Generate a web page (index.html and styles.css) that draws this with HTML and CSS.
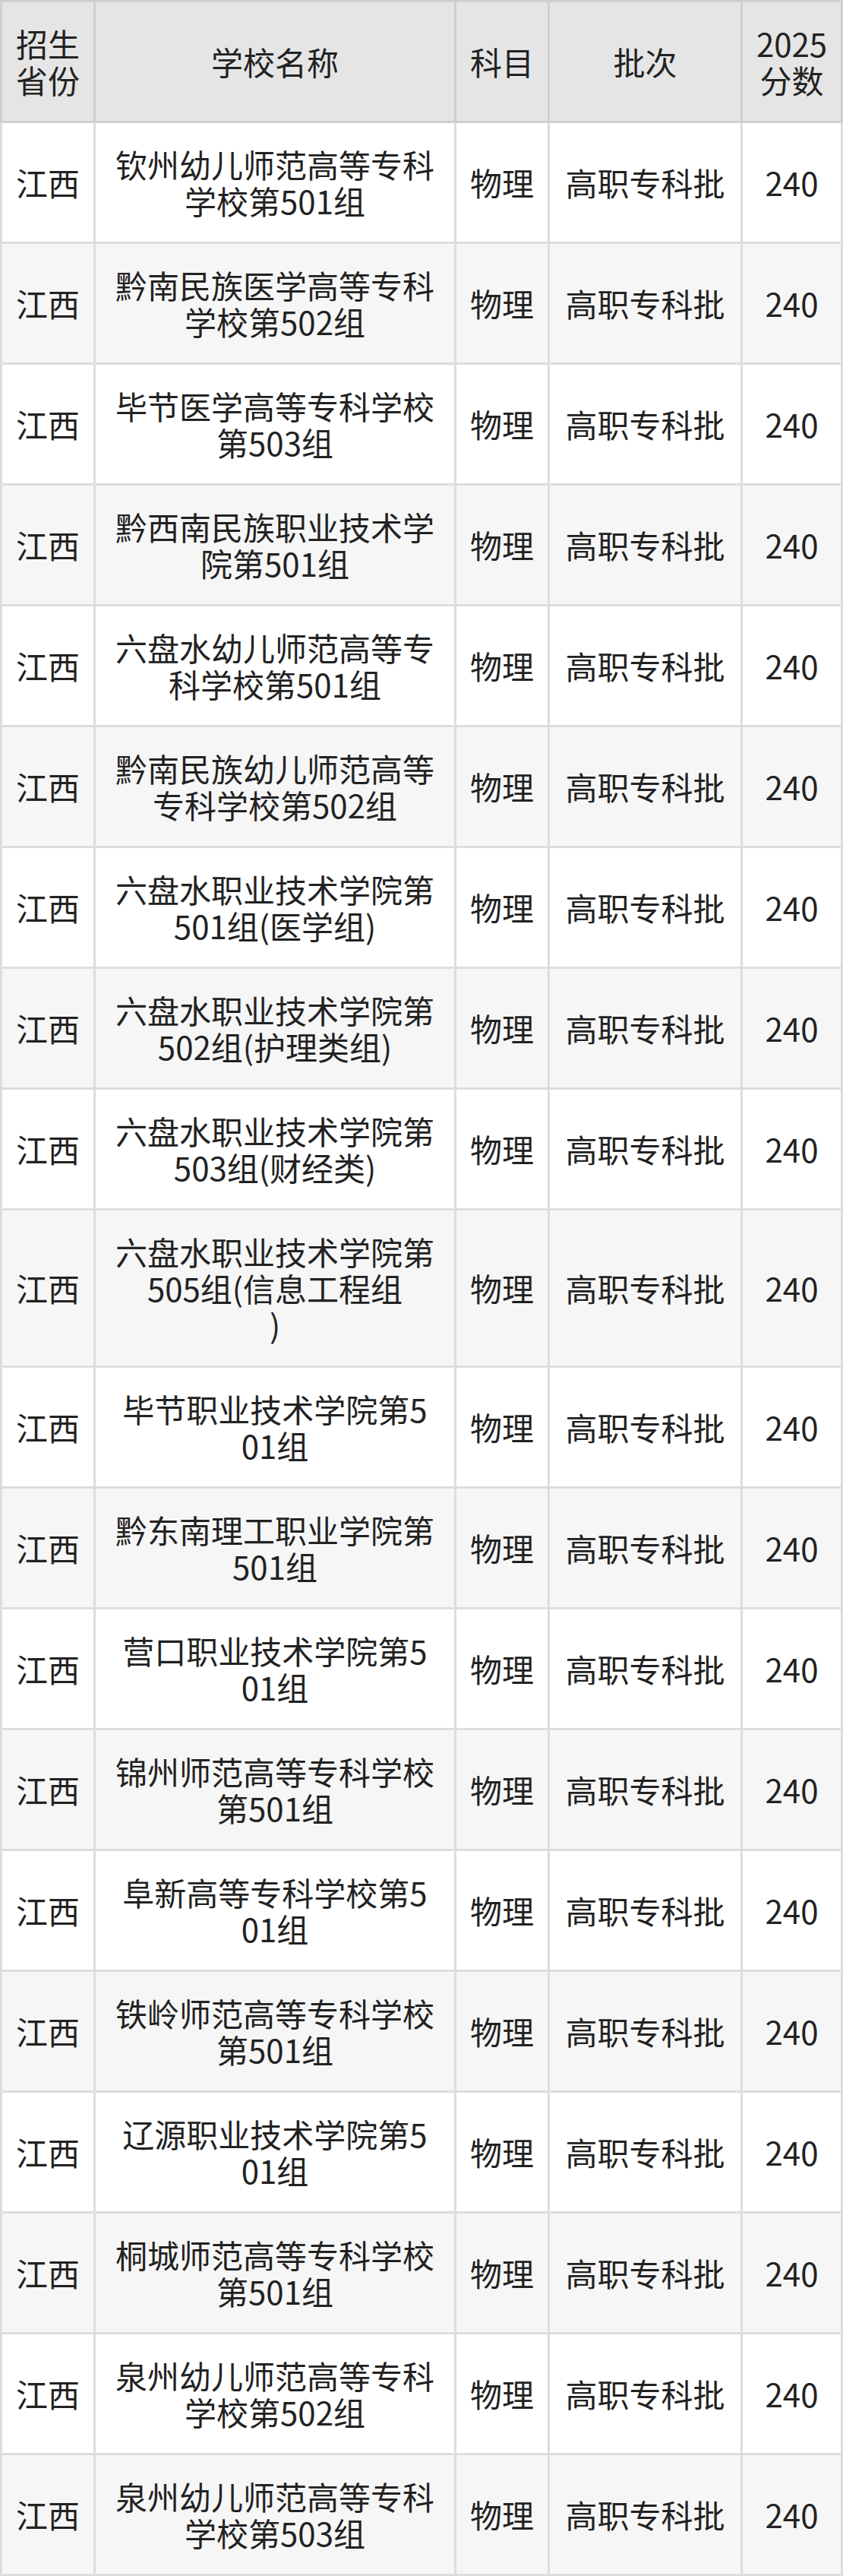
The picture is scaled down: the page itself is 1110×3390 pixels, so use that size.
FILE: index.html
```html
<!DOCTYPE html>
<html lang="zh-CN">
<head>
<meta charset="utf-8">
<title>录取分数</title>
<link rel="stylesheet" href="styles.css">
</head>
<body>
<table class="score-table">
  <thead>
    <tr>
      <th class="c-prov">招生省份</th>
      <th class="c-name">学校名称</th>
      <th class="c-subj">科目</th>
      <th class="c-batch">批次</th>
      <th class="c-score">2025分数</th>
    </tr>
  </thead>
  <tbody>
    <tr><td>江西</td><td class="name">钦州幼儿师范高等专科学校第501组</td><td>物理</td><td>高职专科批</td><td>240</td></tr>
    <tr><td>江西</td><td class="name">黔南民族医学高等专科学校第502组</td><td>物理</td><td>高职专科批</td><td>240</td></tr>
    <tr><td>江西</td><td class="name">毕节医学高等专科学校第503组</td><td>物理</td><td>高职专科批</td><td>240</td></tr>
    <tr><td>江西</td><td class="name">黔西南民族职业技术学院第501组</td><td>物理</td><td>高职专科批</td><td>240</td></tr>
    <tr><td>江西</td><td class="name">六盘水幼儿师范高等专科学校第501组</td><td>物理</td><td>高职专科批</td><td>240</td></tr>
    <tr><td>江西</td><td class="name">黔南民族幼儿师范高等专科学校第502组</td><td>物理</td><td>高职专科批</td><td>240</td></tr>
    <tr><td>江西</td><td class="name">六盘水职业技术学院第501组(医学组)</td><td>物理</td><td>高职专科批</td><td>240</td></tr>
    <tr><td>江西</td><td class="name">六盘水职业技术学院第502组(护理类组)</td><td>物理</td><td>高职专科批</td><td>240</td></tr>
    <tr><td>江西</td><td class="name">六盘水职业技术学院第503组(财经类)</td><td>物理</td><td>高职专科批</td><td>240</td></tr>
    <tr><td>江西</td><td class="name">六盘水职业技术学院第505组(信息工程组<br>)</td><td>物理</td><td>高职专科批</td><td>240</td></tr>
    <tr><td>江西</td><td class="name">毕节职业技术学院第501组</td><td>物理</td><td>高职专科批</td><td>240</td></tr>
    <tr><td>江西</td><td class="name">黔东南理工职业学院第501组</td><td>物理</td><td>高职专科批</td><td>240</td></tr>
    <tr><td>江西</td><td class="name">营口职业技术学院第501组</td><td>物理</td><td>高职专科批</td><td>240</td></tr>
    <tr><td>江西</td><td class="name">锦州师范高等专科学校第501组</td><td>物理</td><td>高职专科批</td><td>240</td></tr>
    <tr><td>江西</td><td class="name">阜新高等专科学校第501组</td><td>物理</td><td>高职专科批</td><td>240</td></tr>
    <tr><td>江西</td><td class="name">铁岭师范高等专科学校第501组</td><td>物理</td><td>高职专科批</td><td>240</td></tr>
    <tr><td>江西</td><td class="name">辽源职业技术学院第501组</td><td>物理</td><td>高职专科批</td><td>240</td></tr>
    <tr><td>江西</td><td class="name">桐城师范高等专科学校第501组</td><td>物理</td><td>高职专科批</td><td>240</td></tr>
    <tr><td>江西</td><td class="name">泉州幼儿师范高等专科学校第502组</td><td>物理</td><td>高职专科批</td><td>240</td></tr>
    <tr><td>江西</td><td class="name">泉州幼儿师范高等专科学校第503组</td><td>物理</td><td>高职专科批</td><td>240</td></tr>
  </tbody>
</table>
</body>
</html>
```
FILE: styles.css
```css
html, body {
  margin: 0;
  padding: 0;
  background: #ffffff;
}

body {
  font-family: "Noto Sans CJK SC", "Noto Sans", sans-serif;
  color: #222222;
  font-size: 42px;
  line-height: 48px;
}

.score-table {
  width: 1110px;
  table-layout: fixed;
  border-collapse: separate;
  border-spacing: 0;
}

.score-table th,
.score-table td {
  box-sizing: border-box;
  padding: 30px 15px;
  text-align: center;
  vertical-align: middle;
  font-weight: normal;
}

.score-table th {
  background: #e5e5e5;
  border-top: 3px solid #cfcfcf;
  border-right: 3px solid #cfcfcf;
  border-bottom: 3px solid #cfcfcf;
}

.score-table th:first-child {
  border-left: 3px solid #cfcfcf;
}

.score-table td {
  border-right: 3px solid #dddddd;
  border-bottom: 3px solid #dddddd;
}

.score-table td:first-child {
  border-left: 3px solid #dddddd;
}

.score-table tbody tr:nth-child(even) td {
  background: #f6f6f6;
}

.c-prov { width: 126px; }
.c-name { width: 475px; }
.c-subj { width: 123px; }
.c-batch { width: 254px; }
.c-score { width: 132px; }

.score-table td.name,
.score-table th.c-name {
  padding-left: 25px;
  padding-right: 25px;
}

.score-table td.name {
  word-break: break-all;
}
```
